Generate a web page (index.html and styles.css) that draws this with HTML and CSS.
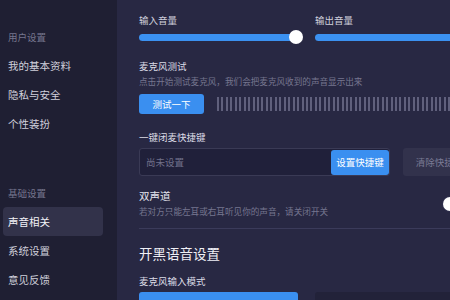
FILE: index.html
```html
<!DOCTYPE html>
<html lang="zh">
<head>
<meta charset="utf-8">
<link rel="stylesheet" href="styles.css">
</head>
<body>
<div class="app">
  <aside class="sidebar">
    <div class="group-label">用户设置</div>
    <div class="nav-item">我的基本资料</div>
    <div class="nav-item">隐私与安全</div>
    <div class="nav-item">个性装扮</div>
    <div class="group-label group-gap">基础设置</div>
    <div class="nav-item active">声音相关</div>
    <div class="nav-item">系统设置</div>
    <div class="nav-item">意见反馈</div>
  </aside>
  <main class="main">
    <div class="content">
      <div class="two-col">
        <div class="col">
          <div class="label">输入音量</div>
          <div class="slider">
            <div class="track"></div>
            <div class="thumb"></div>
          </div>
        </div>
        <div class="col">
          <div class="label">输出音量</div>
          <div class="slider">
            <div class="track"></div>
          </div>
        </div>
      </div>

      <div class="title mic-title">麦克风测试</div>
      <div class="desc">点击开始测试麦克风，我们会把麦克风收到的声音显示出来</div>
      <div class="test-row">
        <button class="btn-blue btn-test">测试一下</button>
        <div class="bars"></div>
      </div>

      <div class="title hotkey-title">一键闭麦快捷键</div>
      <div class="hotkey-row">
        <div class="hotkey-input">
          <span class="placeholder">尚未设置</span>
          <button class="btn-blue btn-set">设置快捷键</button>
        </div>
        <button class="btn-grey">清除快捷键</button>
      </div>

      <div class="stereo-row">
        <div>
          <div class="title-lg">双声道</div>
          <div class="desc">若对方只能左耳或右耳听见你的声音，请关闭开关</div>
        </div>
        <div class="toggle"><div class="knob"></div></div>
      </div>

      <div class="divider"></div>

      <h2 class="heading">开黑语音设置</h2>
      <div class="title mode-title">麦克风输入模式</div>
      <div class="two-col mode-row">
        <div class="mode-blue"></div>
        <div class="mode-dark"></div>
      </div>
    </div>
  </main>
</div>
</body>
</html>
```

FILE: styles.css
```css
* { box-sizing: border-box; margin: 0; padding: 0; }
html, body {
  width: 450px;
  height: 300px;
  overflow: hidden;
}
body {
  font-family: "Noto Sans CJK SC", "Noto Sans", sans-serif;
  background: #282843;
  color: #e4e4ee;
}
.app {
  display: flex;
  width: 450px;
  height: 300px;
  overflow: hidden;
}
.sidebar {
  width: 117px;
  flex: none;
  background: #1f1f33;
  padding-top: 23px;
}
.group-label {
  height: 28px;
  line-height: 28px;
  padding-left: 8px;
  font-size: 9.5px;
  color: #76768e;
}
.group-gap { margin-top: 41px; }
.nav-item {
  height: 29px;
  line-height: 29px;
  padding-left: 8px;
  font-size: 10.5px;
  color: #d0d0dc;
}
.nav-item.active {
  margin: 0 14px 0 3px;
  padding-left: 5px;
  background: #32324a;
  border-radius: 4px;
  color: #f2f2f8;
}
.main {
  flex: 1;
  overflow: hidden;
  padding-left: 22px;
  padding-top: 13px;
}
.content {
  width: 337px;
}
.two-col {
  display: grid;
  grid-template-columns: 161px 161px;
  column-gap: 15px;
}
.label {
  font-size: 9.5px;
  line-height: 14px;
  color: #cfcfdc;
}
.slider {
  position: relative;
  height: 14px;
  margin-top: 3px;
  display: flex;
  align-items: center;
}
.track {
  width: 100%;
  height: 7px;
  border-radius: 4px;
  background: #3b91f1;
}
.thumb {
  position: absolute;
  left: 150px;
  top: 0;
  width: 14px;
  height: 14px;
  border-radius: 50%;
  background: #ffffff;
}
.title {
  font-size: 9.5px;
  line-height: 14px;
  color: #dcdce6;
}
.mic-title { margin-top: 15px; }
.desc {
  font-size: 8.6px;
  line-height: 14px;
  color: #76768f;
  white-space: nowrap;
  margin-top: 1px;
}
.test-row {
  display: flex;
  align-items: flex-start;
  margin-top: 6px;
  gap: 13px;
}
.btn-blue {
  background: #3a8ff0;
  color: #ffffff;
  border: none;
  font-family: inherit;
  font-size: 9.5px;
  border-radius: 3px;
}
.btn-test {
  width: 65px;
  height: 20px;
  flex: none;
}
.bars {
  margin-top: 3px;
  width: 260px;
  height: 14px;
  flex: none;
  background: repeating-linear-gradient(90deg, #60607c 0 2px, transparent 2px 4.45px);
}
.hotkey-title { margin-top: 16px; }
.hotkey-row {
  display: flex;
  margin-top: 4px;
  gap: 13px;
}
.hotkey-input {
  width: 251px;
  height: 28px;
  flex: none;
  display: flex;
  align-items: center;
  justify-content: space-between;
  background: #20203a;
  border: 1px solid #3a3a55;
  border-radius: 3px;
  padding-left: 6px;
}
.placeholder {
  font-size: 9.5px;
  color: #70708a;
}
.btn-set {
  width: 58px;
  height: 25px;
  margin-right: 0;
}
.btn-grey {
  width: 73px;
  height: 28px;
  flex: none;
  background: #32324c;
  color: #7a7a94;
  border: none;
  border-radius: 3px;
  font-family: inherit;
  font-size: 9.5px;
}
.stereo-row {
  display: flex;
  justify-content: space-between;
  align-items: flex-start;
  margin-top: 13px;
}
.title-lg {
  font-size: 10.5px;
  line-height: 14px;
  color: #e4e4ee;
}
.toggle {
  width: 34px;
  height: 16px;
  margin-top: 7px;
  border-radius: 8px;
  background: #2e2e4c;
  padding: 1px;
  flex: none;
}
.knob {
  width: 14px;
  height: 14px;
  border-radius: 50%;
  background: #ffffff;
}
.divider {
  height: 1px;
  background: #3b3b5a;
  margin-top: 10px;
}
.heading {
  font-size: 13.5px;
  font-weight: 400;
  line-height: 20px;
  color: #f0f0f6;
  margin-top: 14px;
}
.mode-title { margin-top: 11px; }
.mode-row { margin-top: 4px; }
.mode-blue {
  width: 159px;
  height: 28px;
  background: #3a8ff0;
  border-radius: 3px;
}
.mode-dark {
  height: 28px;
  background: #222239;
  border-radius: 3px;
}
```
